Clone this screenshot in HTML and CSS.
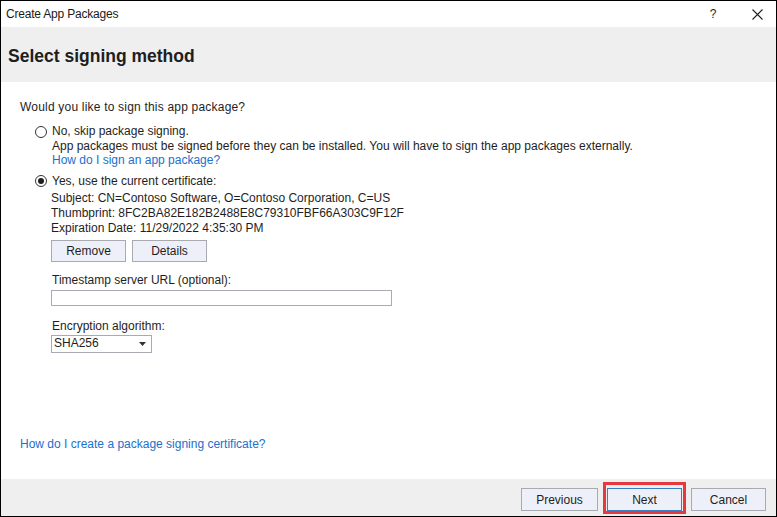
FILE: index.html
```html
<!DOCTYPE html>
<html>
<head>
<meta charset="utf-8">
<link rel="stylesheet" href="styles.css">
</head>
<body>
<div class="window">
  <div class="titlebar">
    <span class="title">Create App Packages</span>
    <div class="tb-buttons">
      <span class="tb-help">?</span>
      <span class="tb-close">
        <svg width="11" height="11" viewBox="0 0 11 11"><path d="M0.5 0.5L10.5 10.5M10.5 0.5L0.5 10.5" stroke="#222" stroke-width="1.1" fill="none"/></svg>
      </span>
    </div>
  </div>
  <div class="header"><h1>Select signing method</h1></div>
  <div class="content">
    <div class="question">Would you like to sign this app package?</div>
    <div class="option opt-no">
      <span class="radio"></span>
      <div class="opt-body">
        <div>No, skip package signing.</div>
        <div>App packages must be signed before they can be installed. You will have to sign the app packages externally.</div>
        <div class="link">How do I sign an app package?</div>
      </div>
    </div>
    <div class="option opt-yes">
      <span class="radio checked"></span>
      <div class="opt-body">
        <div class="yes-label">Yes, use the current certificate:</div>
        <div class="cert">
          <div>Subject: CN=Contoso Software, O=Contoso Corporation, C=US</div>
          <div>Thumbprint: 8FC2BA82E182B2488E8C79310FBF66A303C9F12F</div>
          <div>Expiration Date: 11/29/2022 4:35:30 PM</div>
        </div>
        <div class="cert-buttons">
          <button class="btn btn-small">Remove</button>
          <button class="btn btn-small">Details</button>
        </div>
        <div class="field-label ts-label">Timestamp server URL (optional):</div>
        <div class="textbox"></div>
        <div class="field-label enc-label">Encryption algorithm:</div>
        <div class="select"><span>SHA256</span><svg width="7" height="4" viewBox="0 0 7 4"><path d="M0 0H7L3.5 4Z" fill="#333"/></svg></div>
      </div>
    </div>
    <div class="link bottom-link">How do I create a package signing certificate?</div>
  </div>
  <div class="footer">
    <button class="btn btn-footer btn-prev">Previous</button>
    <button class="btn btn-footer btn-default">Next</button>
    <button class="btn btn-footer">Cancel</button>
  </div>
</div>
</body>
</html>
```
FILE: styles.css
```css
* { box-sizing: border-box; }
html, body { margin: 0; padding: 0; background: #fff; }
body {
  font-family: "Liberation Sans", Arial, sans-serif;
  font-size: 12px;
  color: #1e1e1e;
}
.window {
  width: 777px;
  height: 517px;
  border: 1px solid #000;
  display: flex;
  flex-direction: column;
  background: #fff;
}
.titlebar {
  height: 26px;
  display: flex;
  align-items: center;
  justify-content: space-between;
  padding-left: 5px;
}
.title { font-size: 12px; color: #1a1a1a; letter-spacing: -0.2px; }
.tb-buttons { display: flex; align-items: center; }
.tb-help { width: 20px; text-align: center; font-size: 12px; margin-right: 24px; }
.tb-close { width: 20px; display: flex; justify-content: center; margin-right: 9px; }
.header {
  height: 55px;
  background: #efefef;
  display: flex;
  align-items: center;
  padding: 4px 0 0 7px;
}
.header h1 {
  margin: 0;
  font-size: 17.5px;
  font-weight: bold;
  color: #1e1e1e;
}
.content {
  flex: 1;
  display: flex;
  flex-direction: column;
  padding: 18px 20px 27px 19px;
  line-height: 15px;
}
.question { letter-spacing: 0.2px; }
.option { display: flex; align-items: flex-start; }
.opt-no { margin-top: 9px; padding-left: 15px; line-height: 14.5px; }
.opt-yes { margin-top: 6px; padding-left: 15px; }
.radio {
  width: 12px;
  height: 12px;
  border: 1px solid #333;
  border-radius: 50%;
  margin-top: 1.5px;
  margin-right: 5px;
  flex: none;
  display: flex;
  align-items: center;
  justify-content: center;
  background: #fff;
}
.radio.checked::after {
  content: "";
  width: 6px;
  height: 6px;
  border-radius: 50%;
  background: #1e1e1e;
}
.opt-body { display: flex; flex-direction: column; align-items: flex-start; }
.link { color: #2170cc; }
.cert { margin-top: 2px; margin-left: -1px; }
.cert-buttons { display: flex; gap: 6px; margin-top: 4px; margin-left: -1px; }
.btn {
  font-family: inherit;
  font-size: 12px;
  color: #1e1e1e;
  background: #eef0f9;
  border: 1px solid #a9aab0;
  padding: 0;
  border-radius: 0;
}
.btn-small { width: 75px; height: 22px; }
.ts-label { margin-top: 11px; }
.textbox {
  width: 341px;
  height: 16px;
  border: 1px solid #a8abb3;
  margin-top: 2px;
  margin-left: -1px;
  background: #fff;
}
.enc-label { margin-top: 13px; }
.select {
  width: 101px;
  height: 18px;
  border: 1px solid #a8abb3;
  margin-top: 1px;
  margin-left: -1px;
  display: flex;
  align-items: center;
  justify-content: space-between;
  padding: 0 5px 0 2px;
  background: #fff;
}
.bottom-link { margin-top: auto; }
.footer {
  height: 37px;
  background: #efefef;
  display: flex;
  justify-content: flex-end;
  align-items: flex-start;
  gap: 9px;
  padding: 9px 10px 0 0;
}
.btn-footer { width: 75px; height: 23px; position: relative; }
.btn-prev { width: 77px; }
.btn-default { border-color: #3c7fc0; }
.btn-default::after {
  content: "";
  position: absolute;
  left: -5px;
  right: -5px;
  top: -7px;
  bottom: -4px;
  border: 3px solid #e8383e;
}
```
